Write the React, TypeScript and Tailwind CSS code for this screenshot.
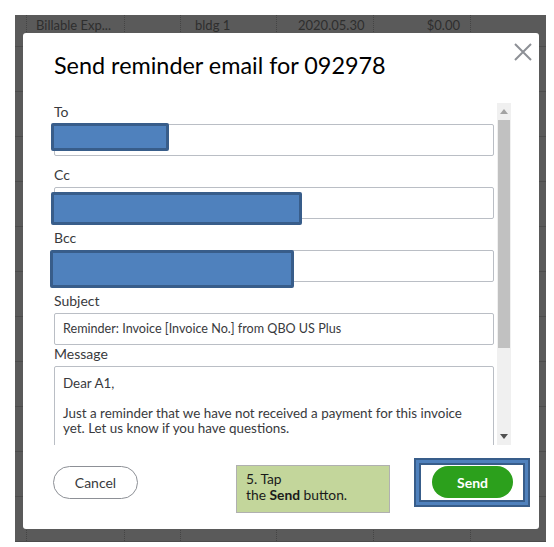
import React from 'react';

const font = { fontFamily: 'Lato, "Open Sans", sans-serif' };

const TableRow = ({ first }: { first?: boolean }) => (
  <div className={`flex border-b border-[#4c4c4c] ${first ? 'h-[32px]' : 'h-[45px]'}`}>
    <div className="w-[11px]" />
    <div className="w-[98px] border-l border-dotted border-[#444] pl-[9px] pt-[1px] text-[13px] text-[#2e2e2e]">
      {first ? 'Billable Exp...' : ''}
    </div>
    <div className="w-[56px] border-l border-dotted border-[#444]" />
    <div className="w-[96px] border-l border-dotted border-[#444] pl-[14px] pt-[1px] text-[13px] text-[#2e2e2e]">
      {first ? 'bldg 1' : ''}
    </div>
    <div className="w-[97px] border-l border-dotted border-[#444] pl-[21px] pt-[1px] text-[13px] text-[#2e2e2e]">
      {first ? '2020.05.30' : ''}
    </div>
    <div className="w-[97px] border-l border-dotted border-[#444] pr-[10px] pt-[1px] text-right text-[13px] text-[#2e2e2e]">
      {first ? '$0.00' : ''}
    </div>
    <div className="flex-1 border-l border-dotted border-[#444]" />
  </div>
);

const Field = ({ label, children, gap = 'mt-[10px]' }: { label: string; children: React.ReactNode; gap?: string }) => (
  <div className={gap}>
    <div className="h-[18px] mb-[3px] text-[14px] leading-[18px] text-[#393a3d]">{label}</div>
    {children}
  </div>
);

const Redact = ({ cls }: { cls: string }) => (
  <div className={`absolute bg-[#4f81bd] border-[3px] border-[#385d8a] rounded-[2px] ${cls}`} />
);

export default function App() {
  return (
    <div className="w-[554px] h-[547px] bg-white pt-[15px] pl-[15px]" style={font}>
      <div className="relative w-[531px] h-[527px] bg-[#5a5a5a] overflow-hidden">
        <TableRow first />
        {Array.from({ length: 11 }).map((_, i) => (
          <TableRow key={i} />
        ))}

        {/* Modal */}
        <div className="absolute left-[8px] top-[18px] w-[516px] h-[496px] bg-white rounded-[3px] flex flex-col">
          <button className="absolute left-[491px] top-[10px] w-[18px] h-[18px]">
            <svg width="18" height="18" viewBox="0 0 18 18">
              <path d="M1 1 L17 17 M17 1 L1 17" stroke="#8d9096" strokeWidth="2" />
            </svg>
          </button>

          <h1 className="pl-[31px] pt-[18px] h-[70px] text-[23.4px] leading-[29px] text-[#000]">
            Send reminder email for 092978
          </h1>

          <div className="ml-[25px] pl-[6px] h-[342px] w-[463px] flex overflow-hidden">
            <div className="w-[440px] shrink-0">
              <Field label="To" gap="">
                <div className="relative h-[32px] border border-[#babec5] rounded-[2px]">
                  <Redact cls="-left-[4px] -top-[2px] w-[118px] h-[28px]" />
                </div>
              </Field>
              <Field label="Cc">
                <div className="relative h-[32px] border border-[#babec5] rounded-[2px]">
                  <Redact cls="-left-[4px] top-[4px] w-[251px] h-[33px]" />
                </div>
              </Field>
              <Field label="Bcc">
                <div className="relative h-[32px] border border-[#babec5] rounded-[2px]">
                  <Redact cls="-left-[5px] -top-[1px] w-[244px] h-[38px]" />
                </div>
              </Field>
              <Field label="Subject">
                <div className="h-[32px] border border-[#babec5] rounded-[2px] pl-[8px] text-[12.6px] leading-[30px] text-[#393a3d]">
                  Reminder: Invoice [Invoice No.] from QBO US Plus
                </div>
              </Field>
              <Field label="Message" gap="">
                <div className="h-[120px] border border-[#babec5] rounded-[2px] pl-[8px] pr-[20px] pt-[9px] text-[13.4px] leading-[15px] text-[#393a3d]">
                  <p>Dear A1,</p>
                  <p>&nbsp;</p>
                  <p>Just a reminder that we have not received a payment for this invoice yet. Let us know if you have questions.</p>
                </div>
              </Field>
            </div>

            {/* Scrollbar */}
            <div className="ml-[3px] w-[14px] h-full bg-[#f0f0f0] flex flex-col items-center">
              <div className="h-[17px] flex items-center justify-center">
                <svg width="8" height="5" viewBox="0 0 8 5"><path d="M0 5 L4 0 L8 5 Z" fill="#a3a3a3" /></svg>
              </div>
              <div className="w-[12px] h-[228px] bg-[#c1c1c1]" />
              <div className="flex-1" />
              <div className="h-[17px] flex items-center justify-center">
                <svg width="8" height="5" viewBox="0 0 8 5"><path d="M0 0 L4 5 L8 0 Z" fill="#505050" /></svg>
              </div>
            </div>
          </div>

          {/* Footer */}
          <div className="flex items-start mt-[13px] pl-[30px]">
            <button className="mt-[8px] w-[85px] h-[33px] rounded-full border border-[#8d9096] text-[14px] text-[#393a3d]">
              Cancel
            </button>
            <div className="ml-[98px] mt-[7px] w-[154px] h-[48px] bg-[#c3d69b] border border-[#b0b0b0] pl-[9px] pt-[5px] text-[13.8px] leading-[16px] text-[#1a1a1a]">
              <div>5. Tap</div>
              <div>the <b>Send</b> button.</div>
            </div>
            <div className="ml-[24px] w-[116px] h-[49px] border-2 border-[#385d8a] bg-[#4f81bd] p-[3px]">
              <div className="w-full h-full border-2 border-[#385d8a] bg-white pl-[11px] pt-[1px]">
                <button className="w-[81px] h-[32px] rounded-full bg-[#2ca01c] text-white text-[14px] font-bold">
                  Send
                </button>
              </div>
            </div>
          </div>
        </div>
      </div>
    </div>
  );
}
